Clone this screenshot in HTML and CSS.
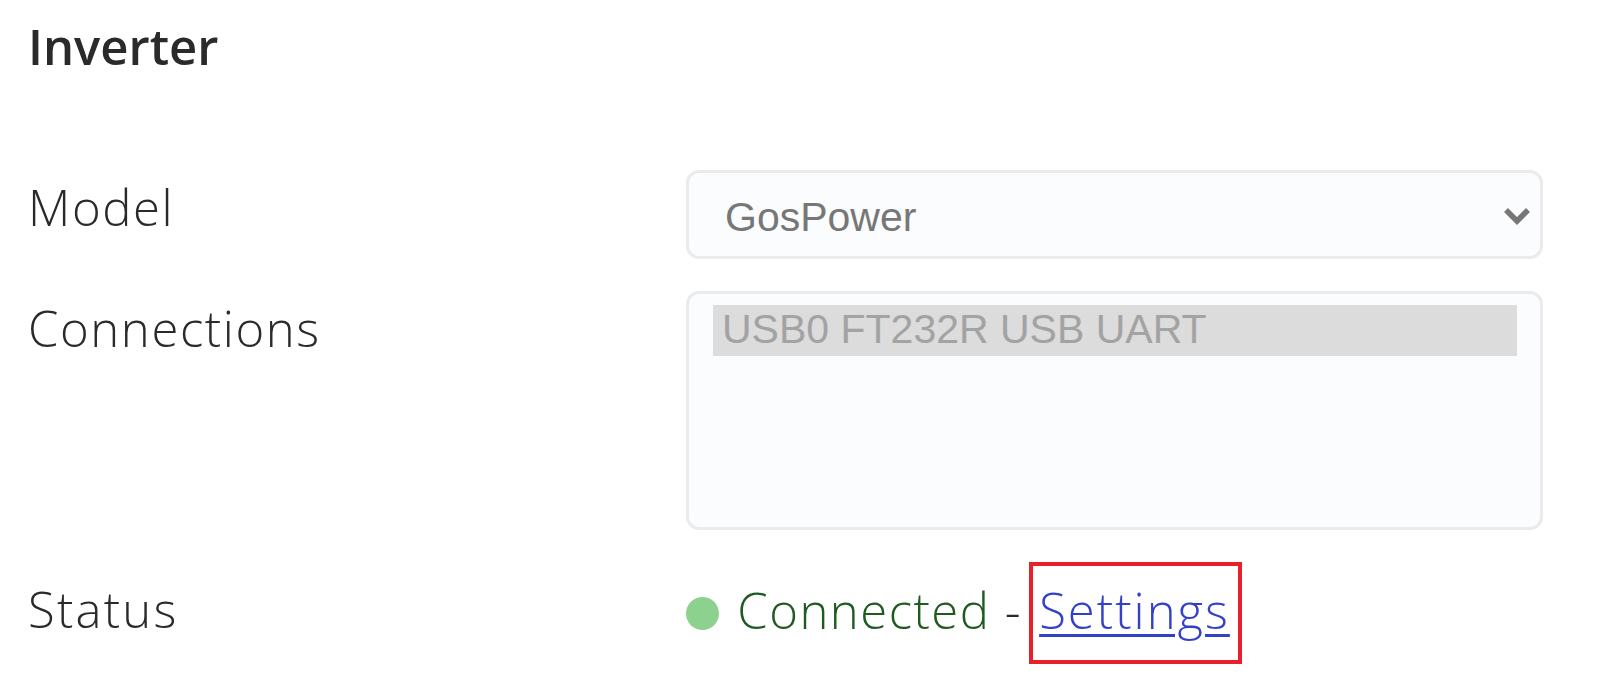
FILE: index.html
```html
<!DOCTYPE html>
<html lang="en">
<head>
<meta charset="utf-8">
<title>Inverter</title>
<link rel="stylesheet" href="styles.css">
</head>
<body>
<main class="panel">
  <h2 class="panel-title">Inverter</h2>
  <div class="form-grid">
    <div class="form-label">Model</div>
    <div class="form-control">
      <div class="select">
        <span class="select-value">GosPower</span>
        <svg class="select-chevron" width="28" height="18" viewBox="0 0 28 18" aria-hidden="true">
          <polyline points="3,3 14,14 25,3" fill="none" stroke="#777777" stroke-width="5.5" stroke-linejoin="miter"/>
        </svg>
      </div>
    </div>

    <div class="form-label">Connections</div>
    <div class="form-control">
      <div class="listbox">
        <div class="listbox-option is-selected">USB0 FT232R USB UART</div>
      </div>
    </div>

    <div class="form-label status-label">Status</div>
    <div class="form-control status">
      <span class="status-dot"></span> <span class="status-text">Connected</span> - <span class="highlight-box"><a class="status-link" href="#">Settings</a></span>
    </div>
  </div>
</main>
</body>
</html>
```

FILE: styles.css
```css
html, body {
  margin: 0;
  padding: 0;
  background: #ffffff;
}

body {
  font-family: "Open Sans", "Noto Sans", sans-serif;
  color: #2a2a2a;
}

.panel {
  padding: 16px 0 0 28px;
}

.panel-title {
  margin: 0 0 94px 0;
  font-size: 49px;
  line-height: 60px;
  font-weight: 600;
  color: #2a2a2a;
}

.form-grid {
  display: grid;
  grid-template-columns: 658px 857px;
  row-gap: 32px;
}

.form-label {
  font-size: 49px;
  line-height: 60px;
  font-weight: 300;
  letter-spacing: 1.6px;
  padding-top: 7px;
  color: #2a2a2a;
}

.select {
  box-sizing: border-box;
  height: 89px;
  border: 3px solid #e9ebec;
  border-radius: 13px;
  background: #fbfcfd;
  display: flex;
  align-items: center;
  justify-content: space-between;
  padding: 4px 9px 0 36px;
}

.select-value {
  font-family: "Liberation Sans", Arial, sans-serif;
  font-size: 41px;
  line-height: 46px;
  color: #777777;
}

.select-chevron {
  display: block;
  margin-top: -2px;
}

.listbox {
  box-sizing: border-box;
  height: 239px;
  border: 3px solid #e9ebec;
  border-radius: 13px;
  background: #fbfcfd;
  padding: 11px 23px 0 24px;
}

.listbox-option {
  height: 51px;
  line-height: 49px;
  padding-left: 9px;
  font-family: "Liberation Sans", Arial, sans-serif;
  font-size: 41px;
  color: #a3a3a3;
  background: #dcdcdc;
}

.status-label {
  padding-top: 17px;
  letter-spacing: 2.2px;
}

.status {
  font-size: 49px;
  line-height: 60px;
  font-weight: 300;
  letter-spacing: 1.5px;
  color: #2a2a2a;
  white-space: nowrap;
}

.status-dot {
  display: inline-block;
  width: 33px;
  height: 33px;
  border-radius: 50%;
  background: #8cd18e;
  vertical-align: middle;
  margin-right: 4px;
  position: relative;
  top: -2px;
}

.status-text {
  color: #1f5a20;
}

.highlight-box {
  display: inline-block;
  margin-left: -7px;
  border: 4px solid #e8202a;
  padding: 14px 8px 20px 6px;
  line-height: 60px;
  letter-spacing: 0;
}

.status-link {
  color: #3341c9;
  text-decoration: underline;
  text-decoration-thickness: 3px;
  text-underline-offset: 5px;
  letter-spacing: 2px;
}
```
